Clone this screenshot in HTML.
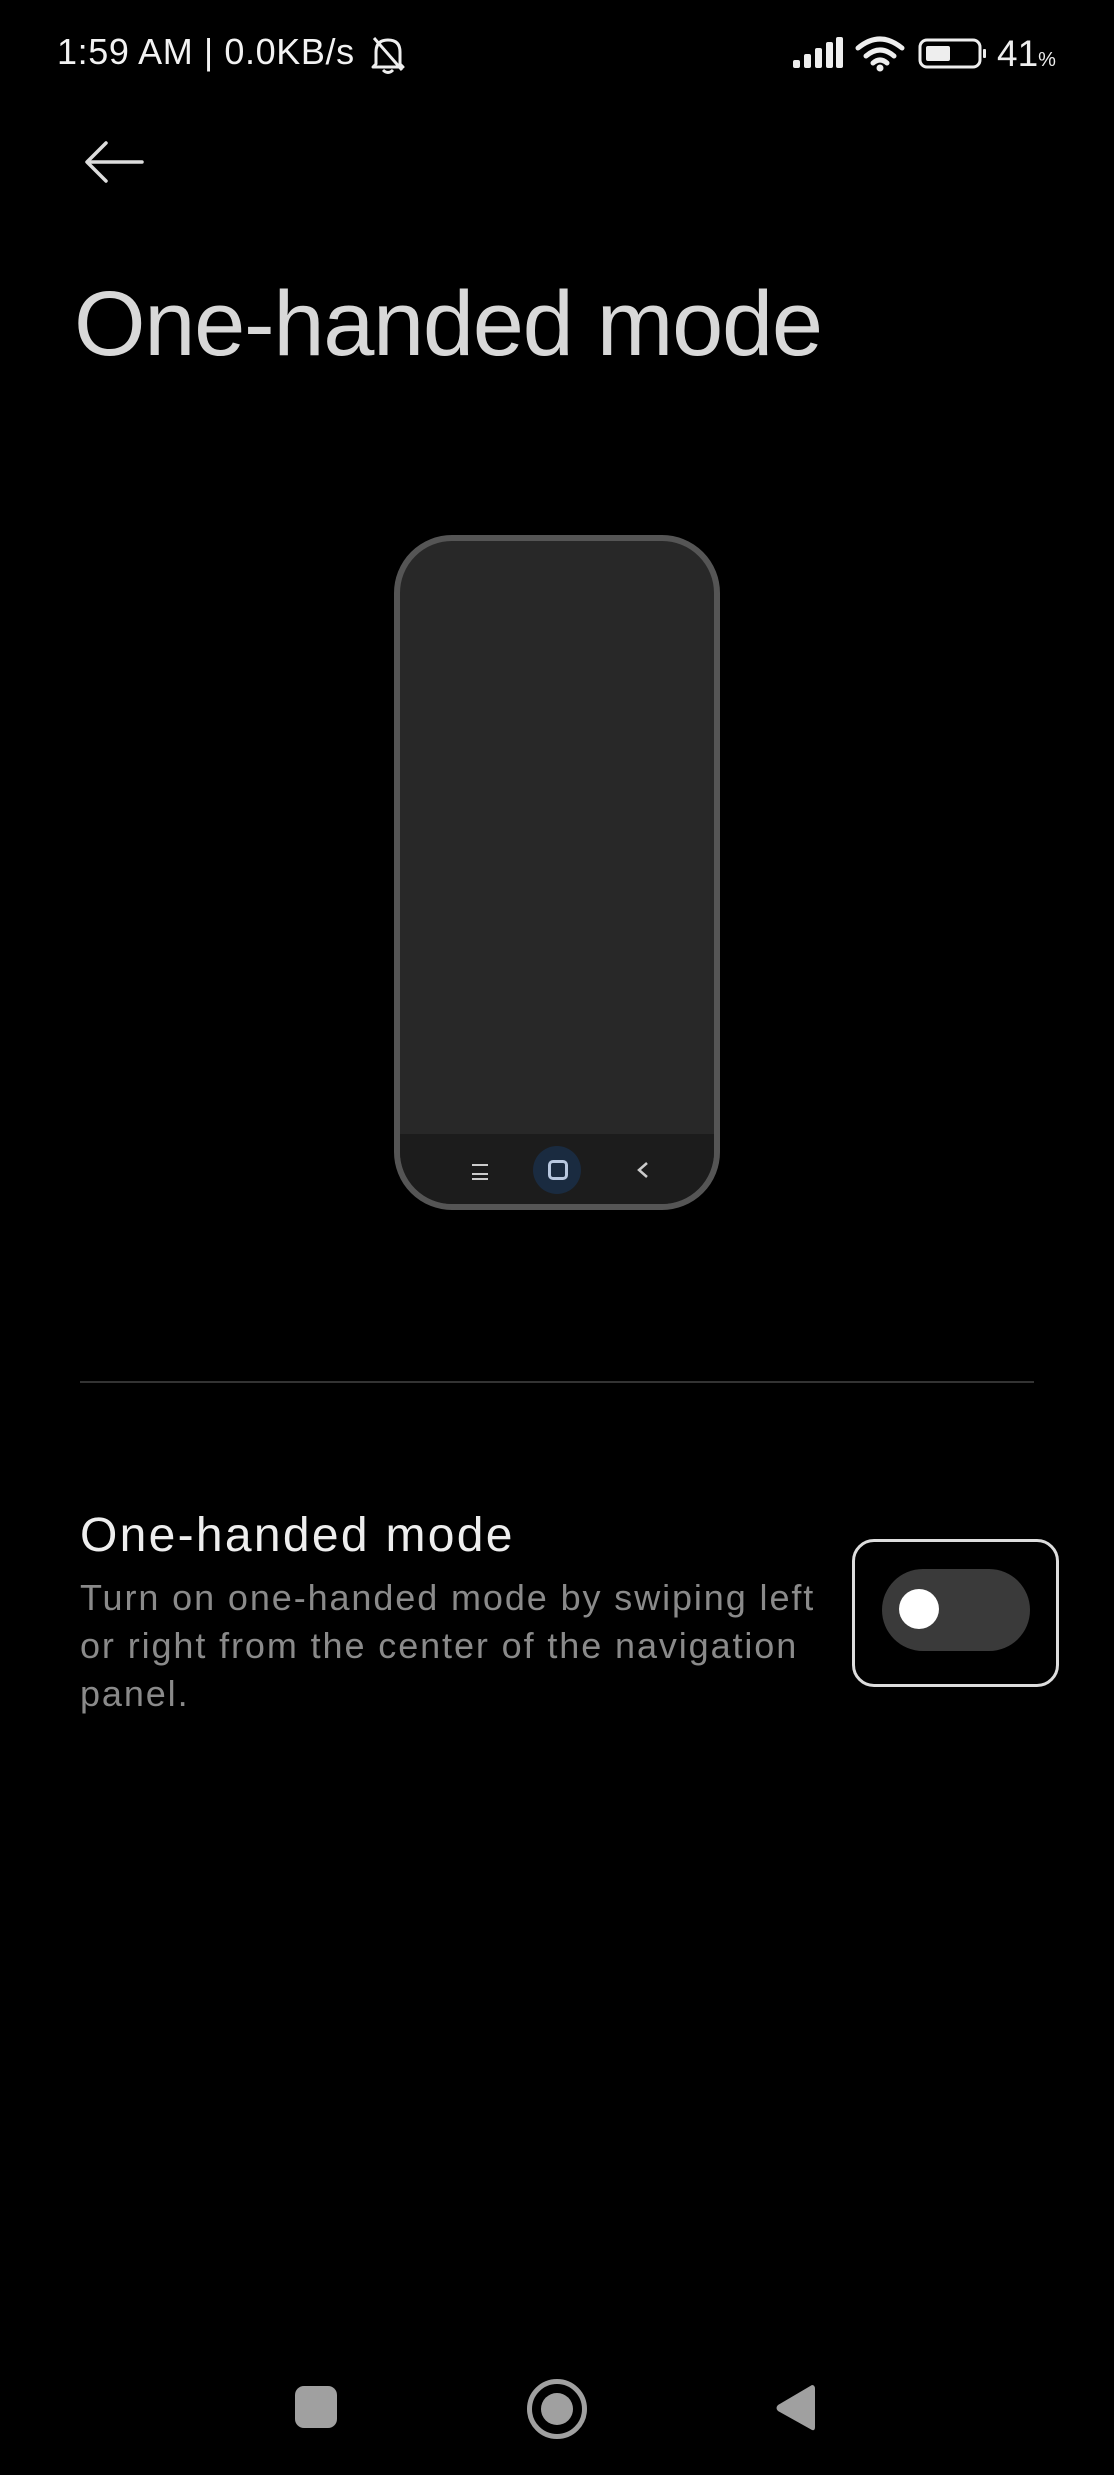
<!DOCTYPE html>
<html><head><meta charset="utf-8"><style>
html,body{margin:0;padding:0;background:#000;}
body{width:1114px;height:2475px;position:relative;overflow:hidden;font-family:"Liberation Sans",sans-serif;}
.a{position:absolute;white-space:nowrap;}
</style></head><body>
<div class="a" style="left:57px;top:31px;font-size:36px;color:#f2f2f2;letter-spacing:0.6px;">1:59 AM | 0.0KB/s</div>
<svg class="a" style="left:368px;top:34px" width="40" height="42" viewBox="0 0 40 42"><path d="M8 30 L8 18 Q8 6 20 6 Q32 6 32 18 L32 30 L35 33 L5 33 Z" fill="none" stroke="#eee" stroke-width="3" stroke-linejoin="round"/><path d="M15 36 Q20 41 25 36" stroke="#eee" stroke-width="3" fill="none"/><line x1="6" y1="4" x2="34" y2="36" stroke="#eee" stroke-width="3"/></svg>
<svg class="a" style="left:790px;top:36px" width="56" height="34" viewBox="0 0 56 34"><g fill="#eee"><rect x="3" y="24" width="7" height="8" rx="2"/><rect x="14" y="18" width="7" height="14" rx="2"/><rect x="25" y="12" width="7" height="20" rx="2"/><rect x="36" y="6" width="7" height="26" rx="2"/><rect x="46" y="1" width="7" height="31" rx="2"/></g></svg>
<svg class="a" style="left:855px;top:36px" width="50" height="36" viewBox="0 0 50 36"><g fill="none" stroke="#eee" stroke-width="5" stroke-linecap="round"><path d="M3 12 Q25 -6 47 12"/><path d="M11 20 Q25 8 39 20"/><path d="M18 27 Q25 21 32 27"/></g><circle cx="25" cy="32" r="3.5" fill="#eee"/></svg>
<svg class="a" style="left:918px;top:38px" width="70" height="32" viewBox="0 0 70 32"><rect x="2" y="2" width="60" height="27" rx="7" fill="none" stroke="#eee" stroke-width="3"/><rect x="8" y="8" width="24" height="15" rx="2" fill="#eee"/><rect x="65" y="11" width="3" height="9" rx="1" fill="#eee"/></svg>
<div class="a" style="left:997px;top:33px;font-size:37px;color:#eee;">41<span style="font-size:20px;">%</span></div>

<svg class="a" style="left:82px;top:138px" width="66" height="48" viewBox="0 0 66 48"><g fill="none" stroke="#ddd" stroke-width="3.5" stroke-linecap="round" stroke-linejoin="round"><path d="M60 24 H6"/><path d="M24 5 L5 24 L24 43"/></g></svg>

<div class="a" style="left:74px;top:272px;font-size:92px;color:#d8d8d8;font-weight:300;letter-spacing:-1.3px;">One-handed mode</div>

<div class="a" style="left:394px;top:535px;width:314px;height:663px;border:6px solid #555;border-radius:58px;background:#282828;overflow:hidden;">
 <div style="position:absolute;left:0;right:0;bottom:0;height:70px;background:#1c1c1c;"></div>
 <div style="position:absolute;left:72px;bottom:24px;width:16px;height:12px;border-top:2px solid #ccc;border-bottom:2px solid #ccc;"></div>
 <div style="position:absolute;left:72px;bottom:29px;width:16px;height:2px;background:#ccc;"></div>
 <div style="position:absolute;left:133px;bottom:10px;width:48px;height:48px;border-radius:50%;background:#1a2b40;"></div>
 <div style="position:absolute;left:148px;bottom:24px;width:14px;height:14px;border:3px solid #b8c8e0;border-radius:5px;"></div>
 <svg style="position:absolute;left:236px;bottom:24px" width="14" height="20" viewBox="0 0 14 20"><path d="M11 3 L3 10 L11 17" fill="none" stroke="#ccc" stroke-width="2.5"/></svg>
</div>

<div class="a" style="left:80px;top:1381px;width:954px;height:2px;background:#333;"></div>

<div class="a" style="left:80px;top:1508px;font-size:48px;color:#eee;letter-spacing:2.3px;">One-handed mode</div>
<div class="a" style="left:80px;top:1574px;font-size:36px;line-height:48px;color:#8a8a8a;letter-spacing:1.9px;">Turn on one-handed mode by swiping left<br>or right from the center of the navigation<br>panel.</div>

<div class="a" style="left:852px;top:1539px;width:201px;height:142px;border:3px solid #ddd;border-radius:22px;"></div>
<div class="a" style="left:882px;top:1569px;width:148px;height:82px;border-radius:41px;background:#3a3a3a;"></div>
<div class="a" style="left:899px;top:1589px;width:40px;height:40px;border-radius:50%;background:#fff;"></div>

<div class="a" style="left:295px;top:2386px;width:42px;height:42px;border-radius:9px;background:#a0a0a0;"></div>
<div class="a" style="left:527px;top:2379px;width:50px;height:50px;border-radius:50%;border:5px solid #a0a0a0;"></div>
<div class="a" style="left:541px;top:2393px;width:32px;height:32px;border-radius:50%;background:#a0a0a0;"></div>
<svg class="a" style="left:774px;top:2383px" width="44" height="50" viewBox="0 0 44 50"><path d="M38 2 Q41 2 41 6 L41 44 Q41 48 38 47 L4 28 Q1 25 4 22 Z" fill="#a0a0a0"/></svg>
</body></html>
